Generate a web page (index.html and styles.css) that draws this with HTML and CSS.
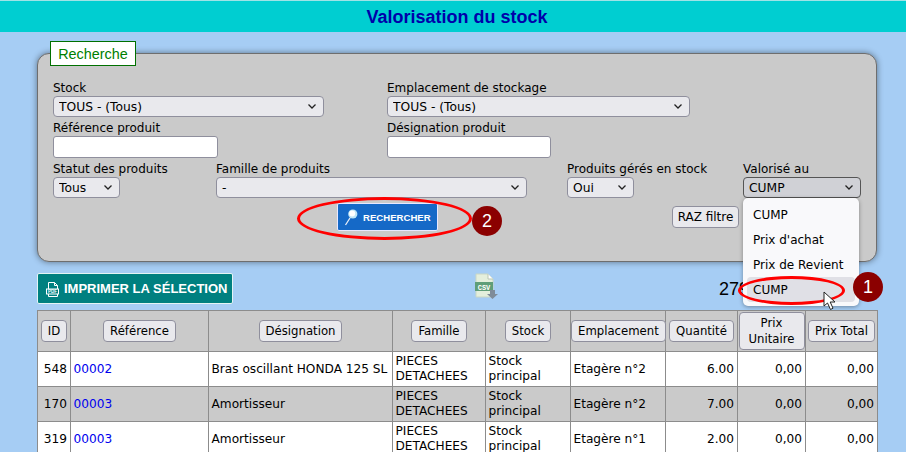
FILE: index.html
```html
<!DOCTYPE html>
<html lang="fr">
<head>
<meta charset="utf-8">
<title>Valorisation du stock</title>
<link rel="stylesheet" href="styles.css">
</head>
<body>
<header class="title-bar"><h1>Valorisation du stock</h1></header>
<main class="content">
  <section class="panel">
    <div class="tab">Recherche</div>
    <div class="row row-1">
      <label class="field w-stock">Stock<select><option>TOUS - (Tous)</option></select></label>
      <label class="field w-empl">Emplacement de stockage<select><option>TOUS - (Tous)</option></select></label>
    </div>
    <div class="row row-2">
      <label class="field w-ref">Référence produit<input type="text"></label>
      <label class="field w-des">Désignation produit<input type="text"></label>
    </div>
    <div class="row row-3">
      <label class="field w-statut">Statut des produits<select><option>Tous</option></select></label>
      <label class="field w-famille">Famille de produits<select><option>-</option></select></label>
      <label class="field w-geres">Produits gérés en stock<select><option>Oui</option></select></label>
      <label class="field w-valo">Valorisé au<select class="is-open"><option>CUMP</option></select></label>
    </div>
    <div class="row row-4">
      <button class="search-btn" type="button">
        <svg class="icon-search" viewBox="0 0 14 17" width="14" height="17"><path d="M6 9 L1.5 16" stroke="#e8eef8" stroke-width="1.3" fill="none"/><circle cx="8.8" cy="5" r="4.6" fill="#bfe6f7"/><circle cx="8.2" cy="4.4" r="3" fill="#ffffff"/></svg>
        RECHERCHER
      </button>
      <button class="raz-btn" type="button">RAZ filtre</button>
    </div>
  </section>

  <div class="toolbar">
    <button class="print-btn" type="button">
      <svg class="icon-pdf" viewBox="0 0 13 15" width="13" height="15"><path d="M2.5 7 V0.5 H8.5 L11.5 3.5 V7 M8.5 0.5 V3.5 H11.5 M2.5 12 V14.5 H11.5 V12" fill="none" stroke="#fff" stroke-width="1"/><rect x="0.5" y="7" width="12" height="5" fill="none" stroke="#fff"/><text x="6.5" y="11.2" class="pdf-text" text-anchor="middle">PDF</text></svg>
      IMPRIMER LA SÉLECTION
    </button>
    <svg class="csv-icon" viewBox="0 0 24 26" width="24" height="26">
      <path d="M1 1 H13 L18 6 V24 H1 Z" fill="#e4efdc" stroke="#c9d6c4"/>
      <path d="M13 1 V6 H18" fill="#fff" stroke="#b9c6b4"/>
      <rect x="0" y="9" width="18" height="9" fill="#5f9e78"/>
      <text x="9" y="16.5" class="csv-text" text-anchor="middle">CSV</text>
      <path d="M15 17 H20 V21 H23 L17.5 26 L12 21 H15 Z" fill="#7f8c99"/>
    </svg>
    <span class="count">279</span>
  </div>

  <table class="grid">
    <colgroup>
      <col class="c1"><col class="c2"><col class="c3"><col class="c4"><col class="c5"><col class="c6"><col class="c7"><col class="c8"><col class="c9">
    </colgroup>
    <thead>
      <tr>
        <th><button type="button">ID</button></th>
        <th><button type="button">Référence</button></th>
        <th><button type="button">Désignation</button></th>
        <th><button type="button">Famille</button></th>
        <th><button type="button">Stock</button></th>
        <th><button type="button">Emplacement</button></th>
        <th><button type="button">Quantité</button></th>
        <th><button class="tall" type="button">Prix Unitaire</button></th>
        <th><button type="button">Prix Total</button></th>
      </tr>
    </thead>
    <tbody>
      <tr>
        <td class="num">548</td><td><a href="#">00002</a></td><td>Bras oscillant HONDA 125 SL</td><td>PIECES DETACHEES</td><td>Stock principal</td><td>Etagère n°2</td><td class="num">6.00</td><td class="num">0,00</td><td class="num">0,00</td>
      </tr>
      <tr class="alt">
        <td class="num">170</td><td><a href="#">00003</a></td><td>Amortisseur</td><td>PIECES DETACHEES</td><td>Stock principal</td><td>Etagère n°2</td><td class="num">7.00</td><td class="num">0,00</td><td class="num">0,00</td>
      </tr>
      <tr>
        <td class="num">319</td><td><a href="#">00003</a></td><td>Amortisseur</td><td>PIECES DETACHEES</td><td>Stock principal</td><td>Etagère n°1</td><td class="num">2.00</td><td class="num">0,00</td><td class="num">0,00</td>
      </tr>
    </tbody>
  </table>
</main>

<ul class="popup">
  <li>CUMP</li>
  <li>Prix d'achat</li>
  <li>Prix de Revient</li>
  <li class="hl">CUMP</li>
</ul>
<div class="ring ring-1"></div>
<div class="ring ring-2"></div>
<div class="badge badge-1">1</div>
<div class="badge badge-2">2</div>
<svg class="cursor" viewBox="0 0 14 20" width="14" height="20"><path d="M1 1 V15 L4.5 12 L7.5 18.5 L10 17.2 L7.2 11 H12 Z" fill="#fff" stroke="#222" stroke-width="1"/></svg>
</body>
</html>
```
FILE: styles.css
```css
* { box-sizing: border-box; }
html, body { margin: 0; height: 452px; overflow: hidden; }
body { position: relative; background: #a6cdf4; font: 12px "DejaVu Sans", sans-serif; color: #000; }

.title-bar { height: 32px; padding: 2px 0 0 8px; border-top: 1px solid #9fe3e6; background: #00ced1; display: flex; align-items: center; justify-content: center; }
.title-bar h1 { margin: 0; font: bold 18px "Liberation Sans", sans-serif; color: #0000aa; }

.content { padding: 0 29px 0 37px; }

.panel { position: relative; height: 209px; margin-top: 21px; padding: 26px 0 0 15px; background: #cacaca; border: 1px solid #6e6e6e; border-radius: 12px; box-shadow: 0 0 6px rgba(0,0,0,.45); }
.tab { position: absolute; left: 12px; top: -13px; width: 86px; height: 25px; background: #fff; border: 1px solid #007000; color: #008000; font: 14.4px "Liberation Sans", sans-serif; display: flex; align-items: center; justify-content: center; }

.row { display: flex; }
.field { display: flex; flex-direction: column; line-height: 16px; }
.field select { appearance: none; height: 21px; width: 100%; padding: 0 0 0 5px; font: 12.3px "DejaVu Sans", sans-serif; color: #000; background: #e9e9ed url("data:image/svg+xml,%3Csvg xmlns='http://www.w3.org/2000/svg' width='8' height='5'%3E%3Cpath d='M.5.5 4 4 7.5.5' fill='none' stroke='%23222' stroke-width='1.3'/%3E%3C/svg%3E") no-repeat right 7px center; border: 1px solid #8f8f9d; border-radius: 4px; }
.field input { height: 22px; width: 100%; background: #fff; border: 1px solid #8f8f9d; border-radius: 3px; }
.row-2 { margin-top: 3px; }
.row-3 { margin-top: 3px; height: 42px; }

.w-stock { width: 271px; margin-right: 63px; }
.w-empl { width: 303px; }
.w-ref { width: 165px; margin-right: 169px; }
.w-des { width: 164px; }
.w-statut { width: 67px; margin-right: 96px; white-space: nowrap; }
.w-famille { width: 311px; margin-right: 40px; }
.w-geres { width: 67px; margin-right: 109px; white-space: nowrap; }
.w-valo { width: 118px; }
.field select.is-open { background-color: #d0d1d6; border: 1px solid #555; }

.search-btn { margin-left: 284px; width: 101px; height: 28px; padding: 0 0 0 6px; display: flex; align-items: center; gap: 5px; background: #1569c7; color: #fff; border: 1px solid #e8e8ff; border-radius: 2px; font: bold 9.6px "Liberation Sans", sans-serif; white-space: nowrap; }
.icon-search { flex: none; }
.raz-btn { margin: 3px 0 0 234px; width: 67px; height: 22px; padding: 0; font: 12px "DejaVu Sans", sans-serif; color: #000; background: #e9e9ed; border: 1px solid #8f8f9d; border-radius: 4px; }

.toolbar { display: flex; align-items: flex-start; height: 37px; margin-top: 11px; }
.print-btn { width: 196px; height: 31px; padding: 0 0 0 8px; display: flex; align-items: center; gap: 5px; background: #008080; color: #fff; border: 1px solid #e4f4f4; border-radius: 2px; font: bold 13px "Liberation Sans", sans-serif; white-space: nowrap; }
.icon-pdf { flex: none; margin-top: 2px; }
.pdf-text { font: bold 4.5px "Liberation Sans", sans-serif; fill: #fff; }
.csv-icon { flex: none; margin-left: 242px; }
.csv-text { font: bold 7px "Liberation Mono", monospace; fill: #fff; }
.count { margin: 6px 0 0 220px; font: 18px "Liberation Sans", sans-serif; line-height: 20px; }

.grid { width: 840px; table-layout: fixed; border-collapse: collapse; background: #fff; font-size: 12.15px; }
.c1 { width: 33px; } .c2 { width: 138px; } .c3 { width: 184px; } .c4 { width: 93px; } .c5 { width: 85px; } .c6 { width: 95px; } .c7 { width: 72px; } .c8 { width: 68px; } .c9 { width: 72px; }
.grid th, .grid td { border: 1px solid #8c8c8c; }
.grid thead tr { height: 41px; background: #cacaca; }
.grid th { font-weight: normal; text-align: center; padding: 0; }
.grid th button { font: 11.7px "DejaVu Sans", sans-serif; color: #000; height: 22px; padding: 0 6px; white-space: nowrap; background: #e9e9ed; border: 1px solid #8f8f9d; border-radius: 4px; }
.grid th button.tall { height: 38px; width: 66px; white-space: normal; padding: 0; line-height: 16px; }
.grid tbody tr { height: 35px; }
.grid td { padding: 0 3px 0 2.5px; line-height: 15px; }
.grid .alt { background: #cacaca; }
.grid a { color: #0000ee; text-decoration: none; }
.num { text-align: right; }

.popup { position: absolute; left: 743px; top: 198px; width: 116px; height: 108px; margin: 0; padding: 4px; list-style: none; background: #f9f9fb; border-radius: 5px; box-shadow: 0 1px 4px rgba(0,0,0,.35); }
.popup li { height: 25px; line-height: 26px; padding-left: 6px; border-radius: 4px; }
.popup .hl { background: #e0e0e6; }

.ring { position: absolute; border: 3px solid #f00; border-radius: 50%; }
.ring-1 { left: 738px; top: 276px; width: 107px; height: 29px; }
.ring-2 { left: 297px; top: 197px; width: 175px; height: 43px; }
.badge { position: absolute; width: 30px; height: 30px; border-radius: 50%; background: #8b0000; color: #fff; font: 18px "Liberation Sans", sans-serif; display: flex; align-items: center; justify-content: center; }
.badge-1 { left: 853px; top: 272px; }
.badge-2 { left: 472px; top: 206px; }
.cursor { position: absolute; left: 823px; top: 291px; }
```
